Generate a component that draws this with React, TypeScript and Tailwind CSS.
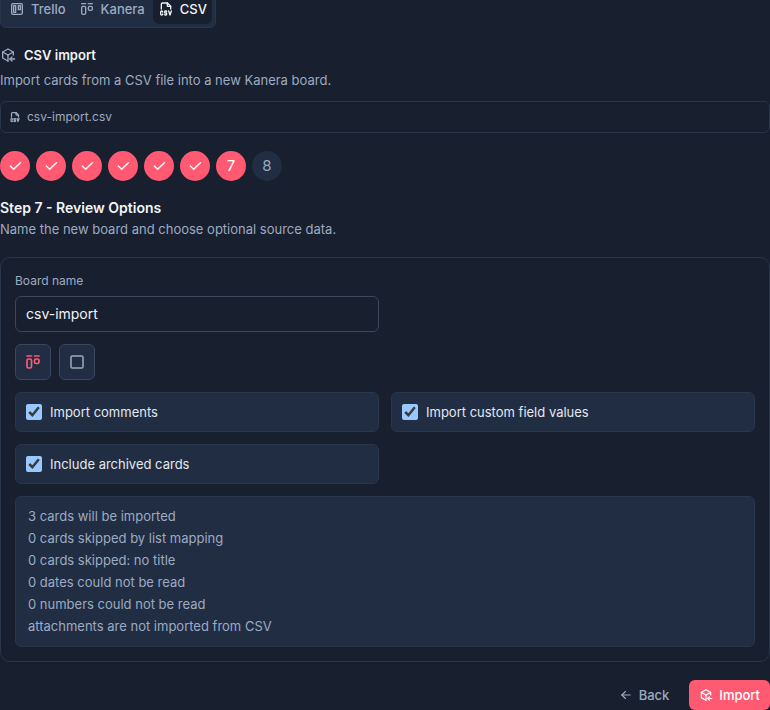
import { useState } from "react";
import type { ReactNode } from "react";
import {
  TbArrowLeft,
  TbBrandTrello,
  TbCheck,
  TbFileTypeCsv,
  TbLayoutKanban,
  TbPackageImport,
  TbSquare,
} from "react-icons/tb";

const STEPS = [1, 2, 3, 4, 5, 6, 7, 8];
const CURRENT_STEP = 7;

const SUMMARY = [
  "3 cards will be imported",
  "0 cards skipped by list mapping",
  "0 cards skipped: no title",
  "0 dates could not be read",
  "0 numbers could not be read",
  "attachments are not imported from CSV",
];

function Tab({ icon, label, active = false }: { icon: ReactNode; label: string; active?: boolean }) {
  return (
    <button
      type="button"
      role="tab"
      aria-selected={active}
      className={`flex h-[30px] items-center gap-1.5 rounded-md px-[5px] text-[13px] font-medium ${
        active ? "bg-[#181f2e] text-[#f1f5f9]" : "text-[#9dabc2]"
      }`}
    >
      {icon}
      {label}
    </button>
  );
}

function Step({ step }: { step: number }) {
  const reached = step <= CURRENT_STEP;
  return (
    <li
      aria-current={step === CURRENT_STEP ? "step" : undefined}
      className={`flex size-[30px] items-center justify-center rounded-full pb-px text-[15px] leading-5 ${
        reached ? "bg-[#ff5a72] text-white" : "bg-[#212d42] text-[#9dabc2]"
      }`}
    >
      {step < CURRENT_STEP ? <TbCheck size={16} /> : step}
    </li>
  );
}

function Option({ label }: { label: string }) {
  const [checked, setChecked] = useState(true);
  return (
    <label className="flex h-10 items-center gap-2 rounded-md border border-[#293549] bg-[#212d42] px-2.5 text-[13px] text-[#e2e8f0]">
      <input
        type="checkbox"
        checked={checked}
        onChange={(e) => setChecked(e.target.checked)}
        className="size-4"
      />
      {label}
    </label>
  );
}

export default function App() {
  const [name, setName] = useState("csv-import");
  return (
    <main className="min-h-screen overflow-hidden bg-[#181f2e] font-[Inter,sans-serif] text-[13px] leading-5 text-[#9dabc2] [color-scheme:dark]">
      <div
        role="tablist"
        className="-mt-2.5 flex w-fit gap-[3px] rounded-md border border-[#293549] bg-[#212d42] p-[3px]"
      >
        <Tab icon={<TbBrandTrello size={16} />} label="Trello" />
        <Tab icon={<TbLayoutKanban size={16} />} label="Kanera" />
        <Tab icon={<TbFileTypeCsv size={16} />} label="CSV" active />
      </div>

      <h2 className="mt-[17px] flex items-center gap-2 text-[13px] font-semibold text-[#f1f5f9]">
        <TbPackageImport size={16} className="text-[#9dabc2]" />
        CSV import
      </h2>
      <p className="mt-[5px]">Import cards from a CSV file into a new Kanera board.</p>

      <div className="mt-[11px] flex h-8 items-center gap-1.5 rounded-md border border-[#293549] px-2 text-xs">
        <TbFileTypeCsv size={12} strokeWidth={2.5} />
        csv-import.csv
      </div>

      <ol className="mt-[18px] flex gap-1.5">
        {STEPS.map((step) => (
          <Step key={step} step={step} />
        ))}
      </ol>

      <h3 className="mt-[17px] text-sm leading-5 font-semibold text-[#f1f5f9]">Step 7 - Review Options</h3>
      <p className="mt-px">Name the new board and choose optional source data.</p>

      <section className="mt-[18px] grid gap-3 rounded-[10px] border border-[#293549] p-3.5">
        <div className="grid grid-cols-2 gap-3">
          <div className="flex flex-col gap-1.5">
            <label htmlFor="board-name" className="text-xs leading-[18px]">
              Board name
            </label>
            <input
              id="board-name"
              value={name}
              onChange={(e) => setName(e.target.value)}
              className="h-9 w-full rounded-md border border-[#3a475c] bg-[#181f2e] px-2.5 pb-px text-sm text-[#f1f5f9] outline-none"
            />
          </div>
        </div>

        <div className="flex gap-2">
          <button
            type="button"
            aria-label="Board icon"
            className="flex size-9 items-center justify-center rounded-md border border-[#3a475c] bg-[#212d42] text-[#ff5a72]"
          >
            <TbLayoutKanban size={18} strokeWidth={2.25} />
          </button>
          <button
            type="button"
            aria-label="Board colour"
            className="flex size-9 items-center justify-center rounded-md border border-[#3a475c] bg-[#212d42]"
          >
            <TbSquare size={16} strokeWidth={2.25} />
          </button>
        </div>

        <div className="grid grid-cols-2 gap-3">
          <Option label="Import comments" />
          <Option label="Import custom field values" />
          <Option label="Include archived cards" />
        </div>

        <ul className="rounded-md border border-[#293549] bg-[#212d42] px-3 pt-2 pb-[9px] leading-[22px]">
          {SUMMARY.map((line) => (
            <li key={line}>{line}</li>
          ))}
        </ul>
      </section>

      <div className="mt-[18px] flex justify-end gap-2">
        <button type="button" className="flex h-[30px] items-center gap-1.5 rounded-md px-3 pb-px font-medium">
          <TbArrowLeft size={14} />
          Back
        </button>
        <button
          type="button"
          className="flex h-[30px] items-center gap-1.5 rounded-md bg-[#ff5a72] px-2.5 pb-px font-medium text-white"
        >
          <TbPackageImport size={14} />
          Import
        </button>
      </div>
    </main>
  );
}
